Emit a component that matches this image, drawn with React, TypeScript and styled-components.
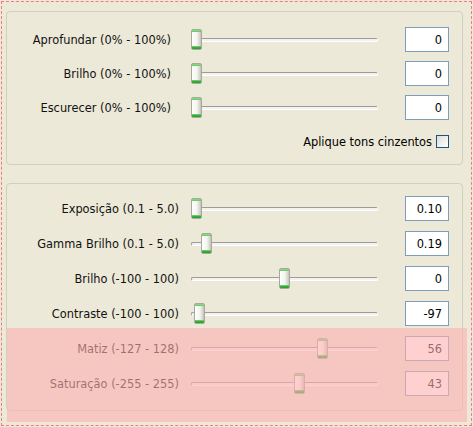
import styled, { createGlobalStyle } from "styled-components";

const GlobalStyle = createGlobalStyle`
    html, body {
        margin: 0;
        padding: 0;
        background-color: #ece9d8;
    }
    body {
        font-family: "DejaVu Sans", "Liberation Sans", sans-serif;
        font-size: 11.4px;
        color: #000000;
    }
`;

const Frame = styled.div`
    position: relative;
    box-sizing: border-box;
    width: 471px;
    height: 425px;
    margin: 1px;
    padding: 9px 0 0 4px;
    border: 1px dashed #f07c7c;
`;

const GroupBox = styled.div<{ $top: number; $padTop: number; $gap: number; $padBottom: number }>`
    box-sizing: border-box;
    width: 457px;
    margin-top: ${(p) => p.$top}px;
    padding: ${(p) => p.$padTop}px 13px ${(p) => p.$padBottom}px 0;
    border: 1px solid #d0d0bf;
    border-radius: 4px;
    display: flex;
    flex-direction: column;
    gap: ${(p) => p.$gap}px;
`;

const Row = styled.div`
    display: flex;
    align-items: center;
    height: 25px;
`;

const Label = styled.div<{ $padRight: number }>`
    box-sizing: border-box;
    flex: 0 0 184px;
    padding-right: ${(p) => p.$padRight}px;
    text-align: right;
    white-space: nowrap;
    color: #111111;
`;

const Track = styled.div`
    position: relative;
    flex: 0 0 187px;
    height: 21px;
    display: flex;
    align-items: center;
`;

const Groove = styled.div`
    box-sizing: border-box;
    width: 100%;
    height: 4px;
    border-top: 1px solid #9d9c99;
    border-left: 1px solid #9d9c99;
    border-bottom: 1px solid #ffffff;
    border-right: 1px solid #ffffff;
    border-radius: 2px;
    background-color: #f3f2ec;
`;

const Thumb = styled.div`
    position: absolute;
    top: 0;
    box-sizing: border-box;
    width: 11px;
    height: 21px;
    border: 1px solid #a9a89e;
    border-radius: 2px;
    background:
        linear-gradient(to bottom, #8fdc8a 0, #63c95f 2px, transparent 2px),
        linear-gradient(to top, #1fa11f 0, #3cb43c 2px, #9fd89f 3px, transparent 3px),
        linear-gradient(to right, #ffffff 0, #f4f4ef 55%, #d6d5cc 85%, #c2c1b8 100%);
`;

const ValueBox = styled.input`
    box-sizing: border-box;
    width: 44px;
    height: 25px;
    margin: 0 0 0 27px;
    padding: 0 6px 0 0;
    border: 1px solid #7f9db9;
    background-color: #ffffff;
    color: #000000;
    font: inherit;
    text-align: right;
    outline: none;
`;

const CheckRow = styled.label`
    display: flex;
    justify-content: flex-end;
    align-items: center;
    gap: 4px;
    height: 15px;
    margin-top: 5px;
`;

const CheckBox = styled.span`
    box-sizing: border-box;
    width: 13px;
    height: 13px;
    border: 1px solid #1c5180;
    background: linear-gradient(135deg, #dcdcd7 0%, #f2f2ee 60%, #ffffff 100%);
`;

const DisabledVeil = styled.div`
    position: absolute;
    left: 5px;
    top: 326px;
    width: 460px;
    height: 94px;
    background-color: rgba(253, 176, 176, 0.6);
    pointer-events: none;
`;

type SliderRow = {
    label: string;
    value: string;
    pos: number;
};

const toneRows: SliderRow[] = [
    { label: "Aprofundar (0% - 100%)", value: "0", pos: 0 },
    { label: "Brilho (0% - 100%)", value: "0", pos: 0 },
    { label: "Escurecer (0% - 100%)", value: "0", pos: 0 },
];

const levelRows: SliderRow[] = [
    { label: "Exposição (0.1 - 5.0)", value: "0.10", pos: 0 },
    { label: "Gamma Brilho (0.1 - 5.0)", value: "0.19", pos: 10 / 176 },
    { label: "Brilho (-100 - 100)", value: "0", pos: 0.5 },
    { label: "Contraste (-100 - 100)", value: "-97", pos: 3 / 200 },
    { label: "Matiz (-127 - 128)", value: "56", pos: 183 / 255 },
    { label: "Saturação (-255 - 255)", value: "43", pos: 298 / 510 },
];

function Slider({ row, padRight }: { row: SliderRow; padRight: number }) {
    return (
        <Row>
            <Label $padRight={padRight}>{row.label}</Label>
            <Track>
                <Groove />
                <Thumb style={{ left: Math.round(row.pos * 176) }} />
            </Track>
            <ValueBox value={row.value} readOnly />
        </Row>
    );
}

function App() {
    return (
        <>
            <GlobalStyle />
            <Frame>
                <GroupBox $top={0} $padTop={15} $gap={9} $padBottom={15}>
                    {toneRows.map((row) => (
                        <Slider key={row.label} row={row} padRight={20} />
                    ))}
                    <CheckRow>
                        <span>Aplique tons cinzentos</span>
                        <CheckBox />
                    </CheckRow>
                </GroupBox>
                <GroupBox $top={18} $padTop={12} $gap={10} $padBottom={14}>
                    {levelRows.map((row) => (
                        <Slider key={row.label} row={row} padRight={12} />
                    ))}
                </GroupBox>
                <DisabledVeil />
            </Frame>
        </>
    );
}

export default App;
